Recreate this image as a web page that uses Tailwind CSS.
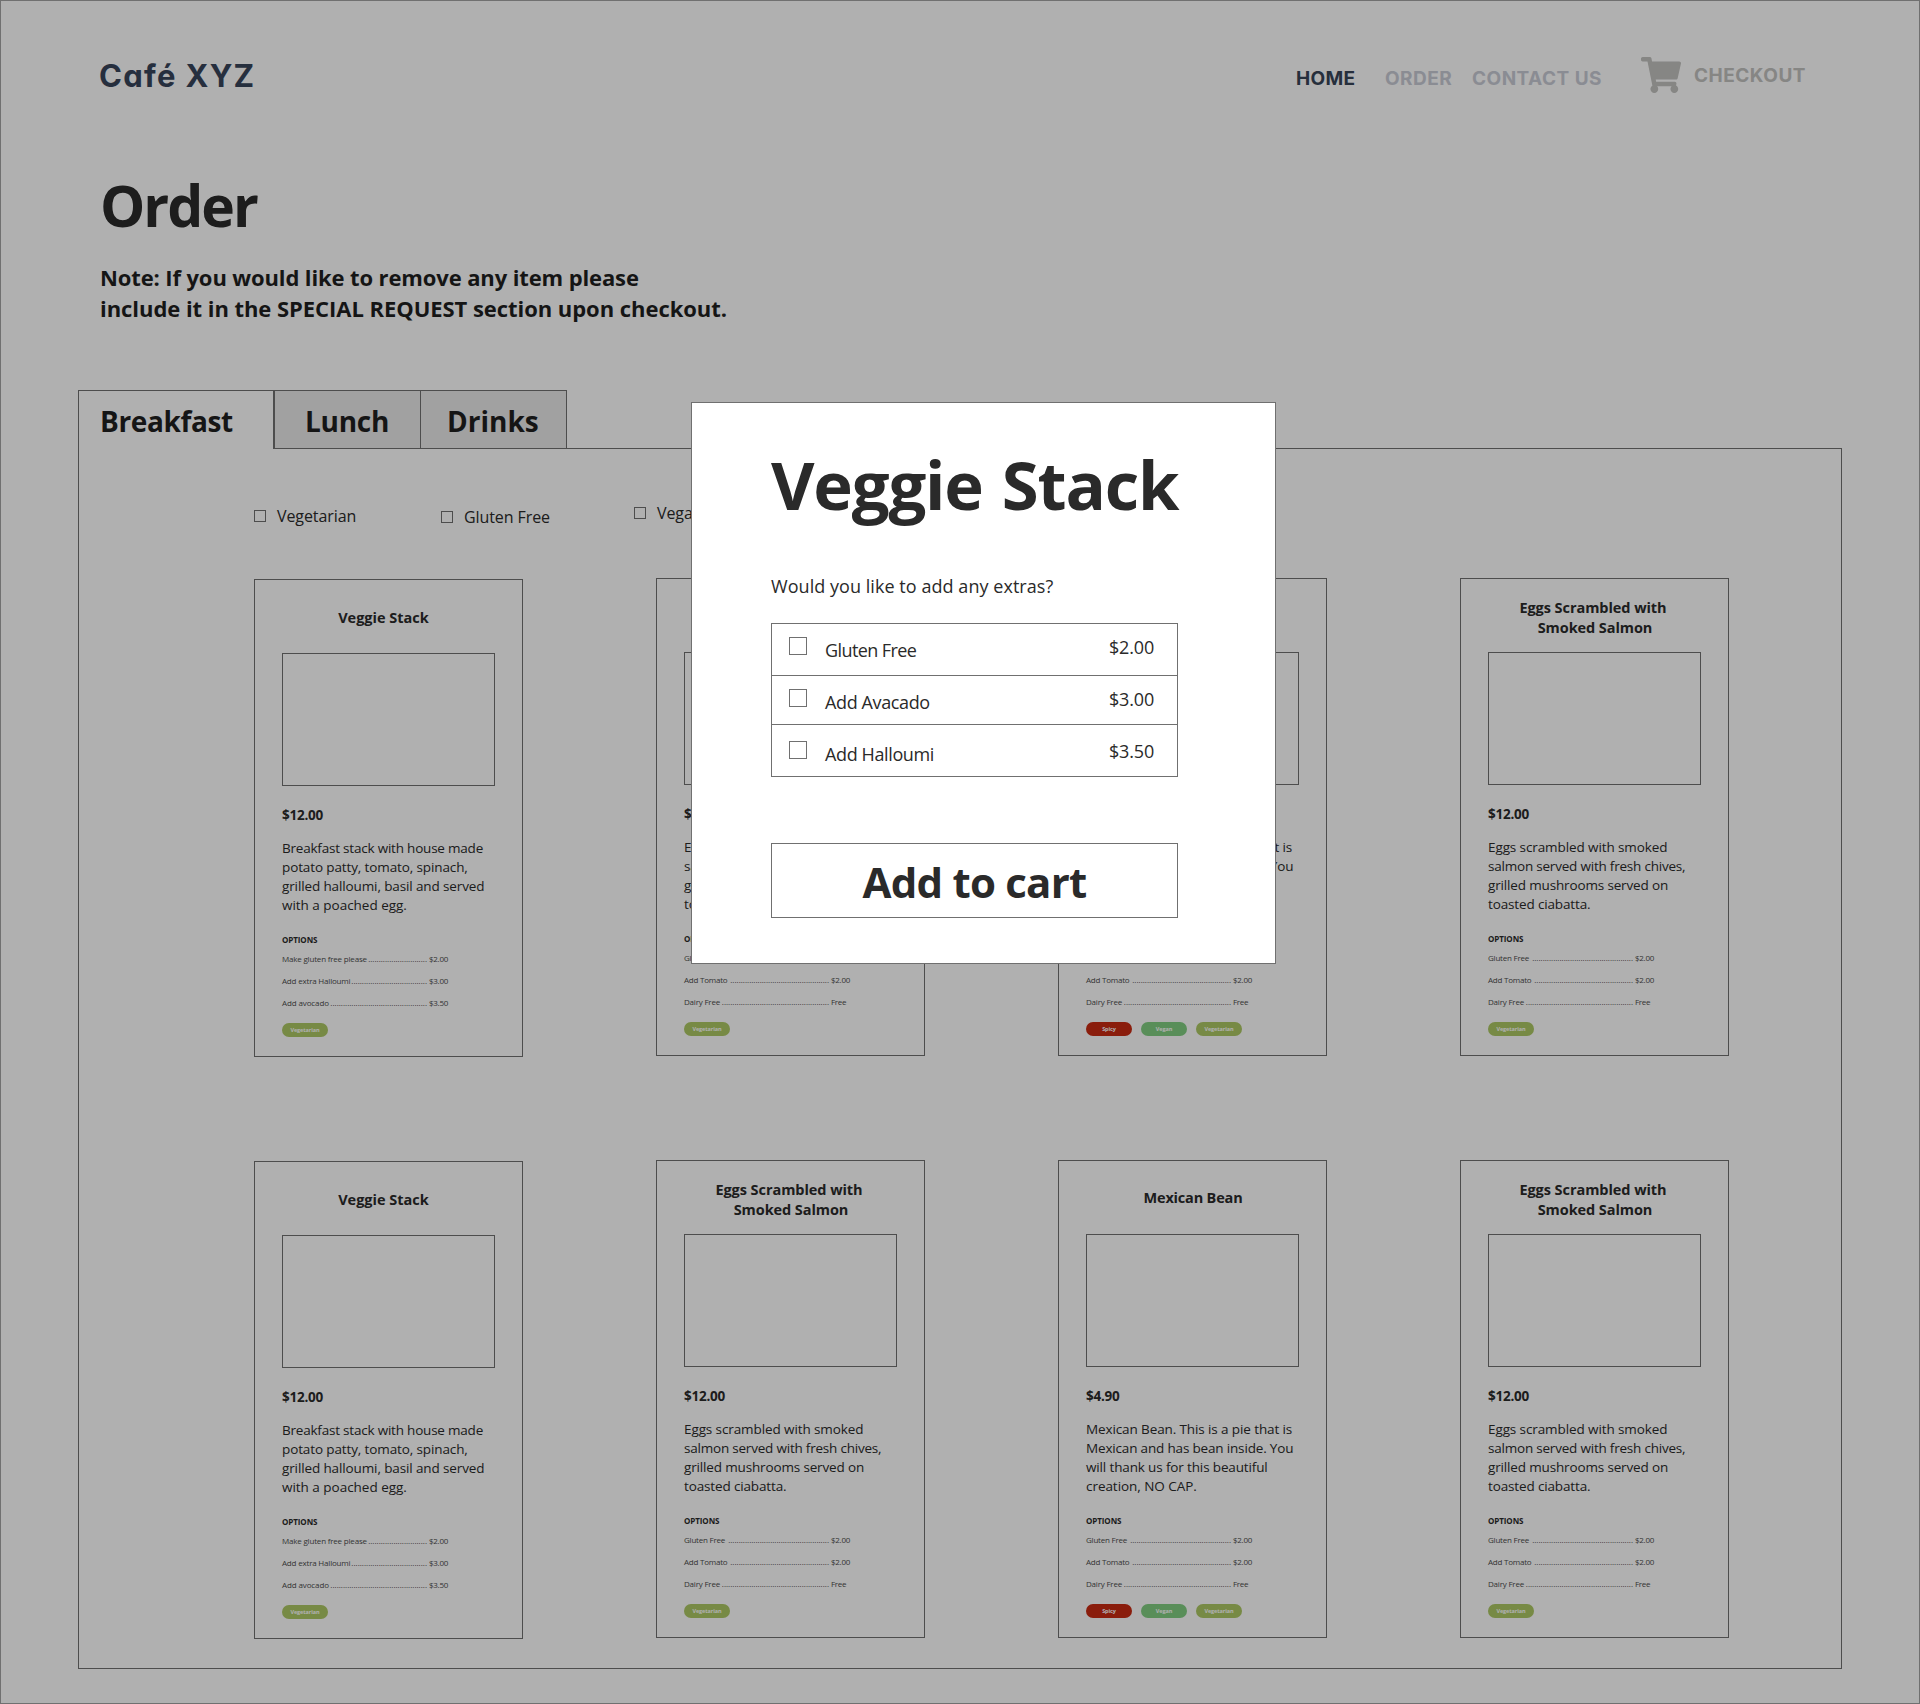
<!DOCTYPE html>
<html lang="en">
<head>
<meta charset="utf-8">
<title>Café XYZ - Order</title>
<script src="https://cdn.jsdelivr.net/npm/@tailwindcss/browser@4"></script>
</head>
<body class="bg-white">
<div class="relative h-[1704px] w-[1920px] overflow-hidden bg-white font-['Open_Sans',sans-serif] text-[#2a2a2a]">
  <header class="flex h-[169px] items-start pl-[99px] font-['Inter',sans-serif] font-bold">
    <div class="mt-[56px] w-[1197px] text-[31px] leading-[40px] tracking-[1.3px] text-[#38445a] [font-feature-settings:'cv11']">Café XYZ</div>
    <nav class="mt-[67px] flex text-[19px] leading-6 tracking-[0.48px] text-[#c9cbd5]">
      <a class="w-[89px] tracking-[0.35px] text-[#374458]">HOME</a>
      <a class="w-[87px]">ORDER</a>
      <a class="w-[169px]">CONTACT US</a>
    </nav>
    <a class="flex items-start text-[19px] leading-6 tracking-[0.5px] text-[#c2c2bf]">
      <svg class="mt-[57px] h-9 w-10" viewBox="0 0 576 512" preserveAspectRatio="none" fill="currentColor"><path d="M528.12 301.319l47.273-208C578.806 78.301 567.391 64 551.99 64H159.208l-9.166-44.81C147.758 8.021 137.93 0 126.529 0H24C10.745 0 0 10.745 0 24v16c0 13.255 10.745 24 24 24h69.883l70.248 343.435C147.325 417.1 136 435.222 136 456c0 30.928 25.072 56 56 56s56-25.072 56-56c0-15.674-6.447-29.835-16.824-40h209.647C430.447 426.165 424 440.326 424 456c0 30.928 25.072 56 56 56s56-25.072 56-56c0-22.172-12.888-41.332-31.579-50.405l5.517-24.276c3.413-15.018-8.002-29.319-23.403-29.319H218.117l-6.545-32h293.145c11.206 0 20.92-7.754 23.403-18.681z"/></svg>
      <span class="mt-16 ml-[13px]">CHECKOUT</span>
    </a>
  </header>

  <section class="h-[221px] pl-[99px] font-bold">
    <h1 class="pl-px text-[57px] leading-[72px] tracking-[-2px]">Order</h1>
    <p class="mt-[21px] pl-px text-[22px] leading-[31px] tracking-[-0.12px] whitespace-nowrap text-[#1f1f1f]">Note: If you would like to remove any item please<br><span class="tracking-[-0.05px]">include it in the SPECIAL REQUEST section upon checkout.</span></p>
  </section>

  <div class="relative z-10 -mb-px flex h-[59px] pl-[78px] text-[28px] leading-9 font-bold text-[#1f1f1f]">
    <div class="h-[59px] w-[196px] border border-b-0 border-[#707070] bg-white pt-3 pl-[21px] tracking-[-0.38px]">Breakfast</div>
    <div class="w-[147px] border border-[#707070] bg-[#e9e9e9] pt-3 pl-[30px] tracking-[-0.28px]">Lunch</div>
    <div class="w-[146px] border border-l-0 border-[#707070] bg-[#e9e9e9] pt-3 pl-[26px]">Drinks</div>
  </div>

  <main class="ml-[78px] h-[1221px] w-[1764px] border border-[#707070] pl-[175px]">
    <div class="flex h-[129px] items-start text-[16px] leading-6 tracking-[-0.09px]">
      <label class="mt-[55px] flex w-[187px]"><i class="mt-[6px] mr-[11px] size-3 border border-[#707070]"></i>Vegetarian</label>
      <label class="mt-[56px] flex w-[193px]"><i class="mt-[6px] mr-[11px] size-3 border border-[#707070]"></i>Gluten Free</label>
      <label class="mt-[52px] flex"><i class="mt-[6px] mr-[11px] size-3 border border-[#707070]"></i>Vegan</label>
    </div>
    <div id="menu" class="grid grid-cols-[repeat(4,269px)] items-start gap-x-[133px] gap-y-[103px]"></div>
  </main>

  <div class="absolute inset-0 z-20 border border-[#707070] bg-black/31"></div>

  <div class="absolute top-[402px] left-[691px] z-30 h-[562px] w-[585px] border border-[#707070] bg-white pr-[97px] pl-[79px]">
    <h2 class="mt-[39px] text-[67px] leading-[84px] font-bold tracking-[-1.2px] [word-spacing:3px] whitespace-nowrap">Veggie Stack</h2>
    <p class="mt-[46px] text-[18px] leading-7 tracking-[0.05px]">Would you like to add any extras?</p>
    <div class="mt-[23px] border border-[#707070] text-[18px] leading-6">
      <div class="flex h-[52px] items-start border-b border-[#707070] pr-[23px] pl-[17px]"><i class="mt-[13px] size-[18px] border border-[#707070]"></i><span class="mt-[14px] ml-[18px] flex-1 tracking-[-0.58px]">Gluten Free</span><span class="mt-[11px] tracking-[-0.18px]">$2.00</span></div>
      <div class="flex h-[49px] items-start border-b border-[#707070] pr-[23px] pl-[17px]"><i class="mt-[13px] size-[18px] border border-[#707070]"></i><span class="mt-[14px] ml-[18px] flex-1 tracking-[-0.38px]">Add Avacado</span><span class="mt-[11px] tracking-[-0.18px]">$3.00</span></div>
      <div class="flex h-[51px] items-start pr-[23px] pl-[17px]"><i class="mt-4 size-[18px] border border-[#707070]"></i><span class="mt-[17px] ml-[18px] flex-1 tracking-[-0.38px]">Add Halloumi</span><span class="mt-[14px] tracking-[-0.18px]">$3.50</span></div>
    </div>
    <button class="mt-[66px] h-[75px] w-full border border-[#707070] pt-[2px] text-[42px] leading-[70px] font-bold tracking-[-0.78px]">Add to cart</button>
  </div>
</div>
<script>
// Each text line is stored as [text, tracking class]; options add the price and the dot leader's length.
const eggOptions = [
  ['Gluten Free', '$2.00', 'tracking-[-0.22px]', 48],
  ['Add Tomato', '$2.00', 'tracking-[-0.22px]', 47],
  ['Dairy Free', 'Free', 'tracking-[-0.2px]', 51],
];
const dishes = {
  veggie: {
    top: 'mt-px', pad: 'pt-[28px] pr-[10px]', price: '$12.00', tags: ['Vegetarian'],
    title: [['Veggie Stack', 'tracking-[0px]']],
    desc: [['Breakfast stack with house made', 'tracking-[-0.21px]'], ['potato patty, tomato, spinach,', 'tracking-[-0.12px]'], ['grilled halloumi, basil and served', 'tracking-[-0.12px]'], ['with a poached egg.', 'tracking-[-0.02px]']],
    options: [['Make gluten free please', '$2.00', 'tracking-[-0.19px]', 28], ['Add extra Halloumi', '$3.00', 'tracking-[-0.19px]', 36], ['Add avocado', '$3.50', 'tracking-[-0.12px]', 46]],
  },
  eggs: {
    top: 'mt-0', pad: 'pt-[19px]', price: '$12.00', tags: ['Vegetarian'],
    title: [['Eggs Scrambled with', 'tracking-[-0.06px] mr-[3px]'], ['Smoked Salmon', 'tracking-[-0.08px] ml-px']],
    desc: [['Eggs scrambled with smoked', 'tracking-[-0.1px]'], ['salmon served with fresh chives,', 'tracking-[-0.21px]'], ['grilled mushrooms served on', 'tracking-[-0.15px]'], ['toasted ciabatta.', 'tracking-[-0.14px]']],
    options: eggOptions,
  },
  bean: {
    top: 'mt-0', pad: 'pt-[27px]', price: '$4.90', tags: ['Spicy', 'Vegan', 'Vegetarian'],
    title: [['Mexican Bean', 'tracking-[-0.18px] ml-px']],
    desc: [['Mexican Bean. This is a pie that is', 'tracking-[-0.11px]'], ['Mexican and has bean inside. You', 'tracking-[-0.17px]'], ['will thank us for this beautiful', 'tracking-[-0.14px]'], ['creation, NO CAP.', 'tracking-[-0.05px]']],
    options: eggOptions,
  },
};
const tagColor = { Spicy: 'bg-[#c82a12]', Vegan: 'bg-[#82ce82]', Vegetarian: 'bg-[#adc864]' };
const lines = list => list.map(([text, cls]) => `<span class="${cls}">${text}</span>`).join('<br>');
const card = d => `
<article class="${d.top} h-[478px] w-[269px] border border-[#707070] px-[27px]">
  <h3 class="h-[73px] text-center text-[14.5px] leading-5 font-bold ${d.pad}">${lines(d.title)}</h3>
  <div class="h-[133px] w-[213px] border border-[#707070]"></div>
  <div class="mt-5 text-[13.5px] leading-[18px] font-bold tracking-[-0.25px]">${d.price}</div>
  <p class="mt-[15px] text-[13.5px] leading-[19px] whitespace-nowrap">${lines(d.desc)}</p>
  <h4 class="mt-[19px] text-[8px] leading-3 font-bold tracking-[-0.08px]">OPTIONS</h4>
  <ul class="mt-[2px] text-[8px] leading-[22px] text-[#4c4c4c]">${d.options.map(([name, cost, cls, dots]) => `
    <li class="flex h-[22px] w-[165px] whitespace-nowrap"><span class="${cls}">${name}</span><span class="ml-auto text-right">${'.'.repeat(dots)}</span><span class="ml-[2px] w-[18px] tracking-[-0.28px]">${cost}</span></li>`).join('')}
  </ul>
  <div class="mt-[9px] flex gap-[9px]">${d.tags.map(t => `<span class="h-[14px] w-[46px] rounded-full text-center text-[5.5px] leading-[14px] font-bold tracking-[-0.1px] text-white ${tagColor[t]}">${t}</span>`).join('')}</div>
</article>`;
document.getElementById('menu').innerHTML =
  ['veggie', 'eggs', 'bean', 'eggs', 'veggie', 'eggs', 'bean', 'eggs'].map(k => card(dishes[k])).join('');
</script>
</body>
</html>
